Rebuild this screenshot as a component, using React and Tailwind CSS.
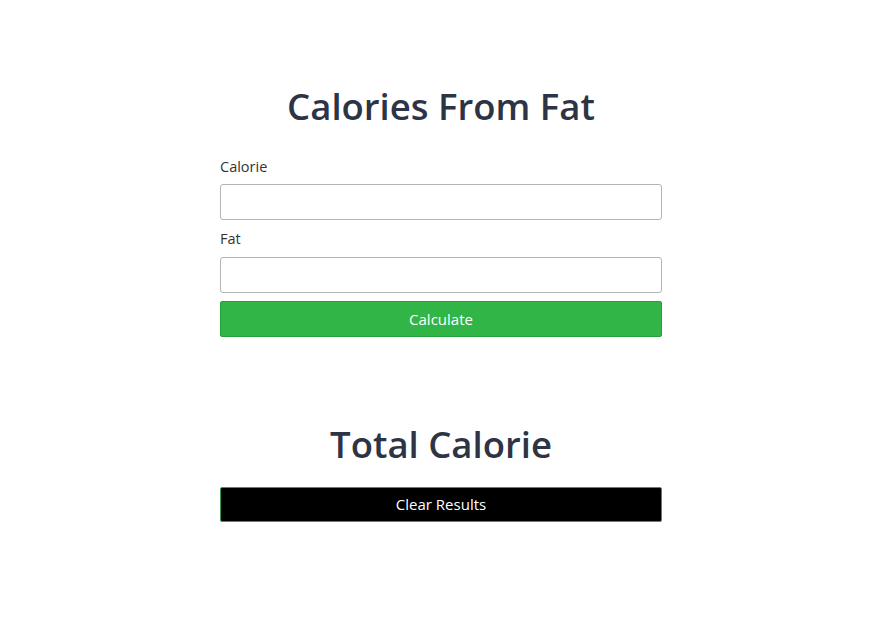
export default function App() {
  return (
    <div className="min-h-[625px] bg-white font-['Open_Sans',sans-serif]">
      <div className="mx-auto w-[442px] pt-[80px]">
        <h1 className="text-center text-[36.5px] font-semibold leading-[52px] text-[#2d3446]">
          Calories From Fat
        </h1>
        <form className="mt-[25px] flex flex-col" onSubmit={(e) => e.preventDefault()}>
          <label className="text-[14.5px] leading-[20px] text-[#333]">Calorie</label>
          <input className="mt-[7px] h-[36px] w-full rounded-[3px] border border-[#b4b4b4] px-2" />
          <label className="mt-[9px] text-[14.5px] leading-[20px] text-[#333]">Fat</label>
          <input className="mt-[8px] h-[36px] w-full rounded-[3px] border border-[#b4b4b4] px-2" />
          <button className="mt-[8px] h-[36px] w-full rounded-[2px] border border-[#28a03c] bg-[#31b546] text-[15px] text-white">
            Calculate
          </button>
        </form>
        <h2 className="mt-[81px] text-center text-[36.5px] font-semibold leading-[52px] text-[#2d3446]">
          Total Calorie
        </h2>
        <button className="mt-[17px] h-[35px] w-full rounded-[2px] border border-[#3c9a50] bg-black text-[15px] text-white">
          Clear Results
        </button>
      </div>
    </div>
  );
}
